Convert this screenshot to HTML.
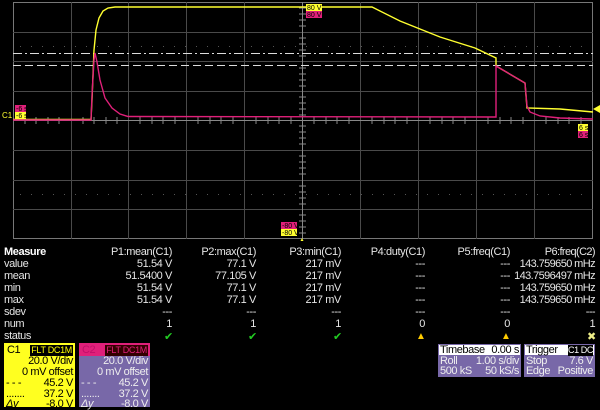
<!DOCTYPE html>
<html><head><style>
body{margin:0;width:600px;height:410px;background:#000;overflow:hidden;font-family:"Liberation Sans",sans-serif;position:relative}
.t{position:absolute;color:#e6e6e6;font-size:11px;line-height:12px;white-space:nowrap;letter-spacing:-0.4px}
.r{text-align:right}
.box{position:absolute;font-size:11px;line-height:11px;letter-spacing:-0.4px}
.row{position:absolute;left:0;right:2px;height:11px}
.row span{position:absolute;white-space:nowrap}
</style></head><body>
<svg width="600" height="241" style="position:absolute;left:0;top:0">
<g stroke="#4a4a4a" stroke-width="1">
<rect x="13.5" y="2.5" width="579" height="236" fill="none" stroke="#777"/>
<line x1="71.5" y1="2" x2="71.5" y2="239"/><line x1="128.5" y1="2" x2="128.5" y2="239"/><line x1="186.5" y1="2" x2="186.5" y2="239"/><line x1="244.5" y1="2" x2="244.5" y2="239"/><line x1="360.5" y1="2" x2="360.5" y2="239"/><line x1="418.5" y1="2" x2="418.5" y2="239"/><line x1="476.5" y1="2" x2="476.5" y2="239"/><line x1="534.5" y1="2" x2="534.5" y2="239"/>
<line x1="13" y1="32.5" x2="593" y2="32.5"/><line x1="13" y1="61.5" x2="593" y2="61.5"/><line x1="13" y1="91.5" x2="593" y2="91.5"/><line x1="13" y1="150.5" x2="593" y2="150.5"/><line x1="13" y1="180.5" x2="593" y2="180.5"/><line x1="13" y1="209.5" x2="593" y2="209.5"/>
</g>
<g stroke="#555" stroke-dasharray="1 10"><line x1="20" y1="46.5" x2="590" y2="46.5"/><line x1="20" y1="194.5" x2="590" y2="194.5"/></g>
<line x1="302.5" y1="2" x2="302.5" y2="239" stroke="#888"/>
<line x1="13" y1="120.5" x2="593" y2="120.5" stroke="#888"/>
<g stroke="#888"><path d="M299 8h7M299 14h7M299 20h7M299 26h7M299 38h7M299 44h7M299 50h7M299 56h7M299 68h7M299 74h7M299 80h7M299 86h7M299 97h7M299 103h7M299 109h7M299 115h7M299 126h7M299 132h7M299 138h7M299 144h7M299 156h7M299 162h7M299 168h7M299 174h7M299 186h7M299 192h7M299 198h7M299 204h7M299 215h7M299 221h7M299 227h7M299 233h7"/>
<path d="M25 117v7M36 117v7M48 117v7M59 117v7M83 117v7M94 117v7M106 117v7M117 117v7M140 117v7M152 117v7M163 117v7M175 117v7M198 117v7M210 117v7M221 117v7M233 117v7M256 117v7M268 117v7M279 117v7M291 117v7M314 117v7M326 117v7M337 117v7M349 117v7M372 117v7M384 117v7M395 117v7M407 117v7M430 117v7M442 117v7M453 117v7M465 117v7M488 117v7M500 117v7M511 117v7M523 117v7M546 117v7M558 117v7M569 117v7M581 117v7"/></g>
<line x1="13" y1="53.5" x2="593" y2="53.5" stroke="#ddd" stroke-dasharray="9 3 2 3"/>
<line x1="13" y1="65.5" x2="593" y2="65.5" stroke="#ddd" stroke-dasharray="8 4"/>
<polyline fill="none" stroke="#ffff30" stroke-width="1.4" points="13,119.5 91,119.5 92,100 94,50 96,30 99,18 103,11 108,8 115,7 372,7 400,21 440,37 475,48 496,58 496,66 525,83 527,108 560,109 593,112"/>
<polyline fill="none" stroke="#e0207a" stroke-width="1.4" points="13,120 91,120 92,95 94,60 95,53 97,62 100,80 105,98 112,108 120,114 128,116.5 496,117 496,66 525,83 527,106 530,112 540,116 560,118 593,119"/>
<polygon points="593,109 600,105 600,113" fill="#ffff30"/>
<g font-family="Liberation Sans" font-size="7">
<rect x="306" y="4" width="16" height="7" fill="#ffff30"/><text x="307" y="10" fill="#000">80 V</text>
<rect x="306" y="11" width="16" height="7" fill="#e0207a"/><text x="307" y="17" fill="#000">80 V</text>
<rect x="281" y="222" width="16" height="7" fill="#e0207a"/><text x="282" y="228" fill="#000">-80 V</text>
<rect x="281" y="229" width="16" height="7" fill="#ffff30"/><text x="282" y="235" fill="#000">-80 V</text>
<rect x="15" y="105" width="11" height="7" fill="#e0207a"/><text x="16" y="111" fill="#000">-6 s</text>
<rect x="15" y="112" width="11" height="7" fill="#ffff30"/><text x="16" y="118" fill="#000">-6 s</text>
<text x="2" y="118" fill="#ffff30" font-size="8">C1</text>
<rect x="578" y="124" width="10" height="7" fill="#ffff30"/><text x="579" y="130" fill="#000">6 s</text>
<rect x="578" y="131" width="10" height="7" fill="#e0207a"/><text x="579" y="137" fill="#000">6 s</text>
</g>
<polygon points="302,238 299,244 305,244" fill="#ffff30"/>
</svg>
<div class="t" style="left:4px;top:246px;font-weight:bold;color:#fff">Measure</div>
<div class="t" style="left:4px;top:258px">value<br>mean<br>min<br>max<br>sdev<br>num<br>status</div>
<div class="t r" style="right:428px;top:246px">P1:mean(C1)<br>51.54 V<br>51.5400 V<br>51.54 V<br>51.54 V<br>---<br>1</div>
<div class="t r" style="right:344px;top:246px">P2:max(C1)<br>77.1 V<br>77.105 V<br>77.1 V<br>77.1 V<br>---<br>1</div>
<div class="t r" style="right:259px;top:246px">P3:min(C1)<br>217 mV<br>217 mV<br>217 mV<br>217 mV<br>---<br>1</div>
<div class="t r" style="right:175px;top:246px">P4:duty(C1)<br>---<br>---<br>---<br>---<br>---<br>0</div>
<div class="t r" style="right:90px;top:246px">P5:freq(C1)<br>---<br>---<br>---<br>---<br>---<br>0</div>
<div class="t r" style="right:5px;top:246px;letter-spacing:-0.6px">P6:freq(C2)<br>143.759650 mHz<br>143.7596497 mHz<br>143.759650 mHz<br>143.759650 mHz<br>---<br>1</div>
<div class="t" style="left:164px;top:331px;color:#2c2">✔</div>
<div class="t" style="left:248px;top:331px;color:#2c2">✔</div>
<div class="t" style="left:333px;top:331px;color:#2c2">✔</div>
<div class="t" style="left:416px;top:331px;color:#fc0;font-size:10px">▲</div>
<div class="t" style="left:501px;top:331px;color:#fc0;font-size:10px">▲</div>
<div class="t" style="left:587px;top:331px;color:#ee8;font-size:11px">✖</div>
<div class="box" style="left:4px;top:343px;width:71px;height:64px;background:#ffff20;color:#000">
 <div class="row" style="top:2px"><span style="left:3px">C1</span><span style="right:0;background:#000;color:#ff0;font-size:9px;padding:0 1px;letter-spacing:-0.3px">FLT DC1M</span></div>
 <div class="row" style="top:13px"><span style="right:0">20.0 V/div</span></div>
 <div class="row" style="top:24px"><span style="right:0">0 mV offset</span></div>
 <div class="row" style="top:35px"><span style="left:2px">- - -</span><span style="right:0">45.2 V</span></div>
 <div class="row" style="top:46px"><span style="left:2px">.......</span><span style="right:0">37.2 V</span></div>
 <div class="row" style="top:56px"><span style="left:2px;font-style:italic">Δy</span><span style="right:0">-8.0 V</span></div>
</div>
<div class="box" style="left:79px;top:343px;width:71px;height:64px;background:#7868a8;color:#eee">
 <div style="position:absolute;left:0;top:0;width:71px;height:13px;background:#e0207a"></div>
 <div class="row" style="top:2px"><span style="left:3px;color:#c0106a">C2</span><span style="right:0;background:#300;color:#e0207a;font-size:9px;padding:0 1px;letter-spacing:-0.3px">FLT DC1M</span></div>
 <div class="row" style="top:13px"><span style="right:0">20.0 V/div</span></div>
 <div class="row" style="top:24px"><span style="right:0">0 mV offset</span></div>
 <div class="row" style="top:35px"><span style="left:2px">- - -</span><span style="right:0">45.2 V</span></div>
 <div class="row" style="top:46px"><span style="left:2px">.......</span><span style="right:0">37.2 V</span></div>
 <div class="row" style="top:56px"><span style="left:2px;font-style:italic">Δy</span><span style="right:0">-8.0 V</span></div>
</div>
<div class="box" style="left:438px;top:344px;width:83px;height:33px;background:#7868a8;color:#eee">
 <div style="position:absolute;left:1px;top:1px;right:1px;height:10px;background:#fff"></div>
 <div class="row" style="top:1px;color:#000"><span style="left:2px">Timebase</span><span style="right:0">0.00 s</span></div>
 <div class="row" style="top:12px"><span style="left:2px">Roll</span><span style="right:0">1.00 s/div</span></div>
 <div class="row" style="top:22px"><span style="left:2px">500 kS</span><span style="right:0">50 kS/s</span></div>
</div>
<div class="box" style="left:524px;top:344px;width:71px;height:33px;background:#7868a8;color:#eee">
 <div style="position:absolute;left:1px;top:1px;right:1px;height:10px;background:#fff"></div>
 <div class="row" style="top:1px;color:#000"><span style="left:2px">Trigger</span><span style="right:0;background:#000;color:#fff;font-size:9px">C1 DC</span></div>
 <div class="row" style="top:12px"><span style="left:2px">Stop</span><span style="right:0">7.6 V</span></div>
 <div class="row" style="top:22px"><span style="left:2px">Edge</span><span style="right:0">Positive</span></div>
</div>
</body></html>
